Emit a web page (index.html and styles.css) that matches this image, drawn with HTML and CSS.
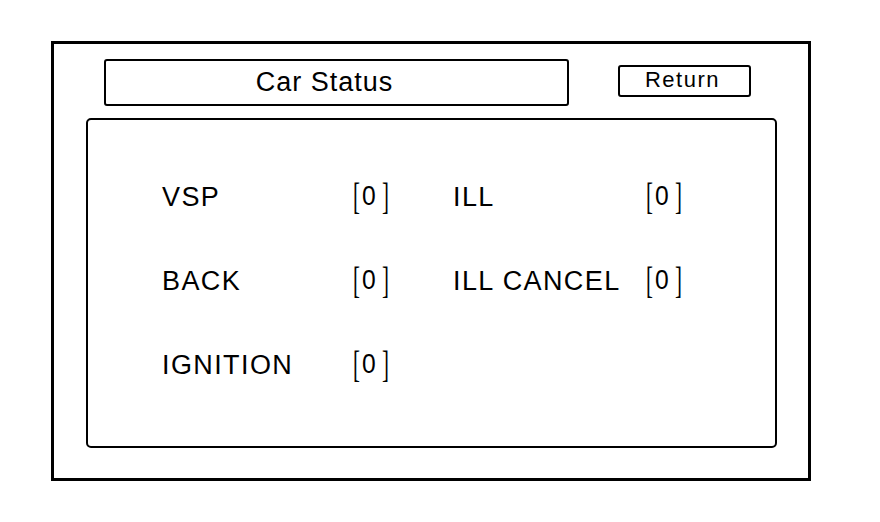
FILE: index.html
```html
<!DOCTYPE html>
<html>
<head>
<meta charset="utf-8">
<link rel="stylesheet" href="styles.css">
</head>
<body>
<div class="frame">
  <div class="header">
    <div class="title">Car Status</div>
    <button class="return">Return</button>
  </div>
  <div class="panel">
    <div class="grid">
      <div class="label">VSP</div>
      <div class="val"><span class="br">[</span><span class="num">0</span><span class="br">]</span></div>
      <div class="label">ILL</div>
      <div class="val"><span class="br">[</span><span class="num">0</span><span class="br">]</span></div>

      <div class="label">BACK</div>
      <div class="val"><span class="br">[</span><span class="num">0</span><span class="br">]</span></div>
      <div class="label">ILL CANCEL</div>
      <div class="val"><span class="br">[</span><span class="num">0</span><span class="br">]</span></div>

      <div class="label">IGNITION</div>
      <div class="val"><span class="br">[</span><span class="num">0</span><span class="br">]</span></div>
      <div class="label"></div>
      <div class="val"></div>
    </div>
  </div>
</div>
</body>
</html>
```
FILE: styles.css
```css
html, body {
  margin: 0;
  padding: 0;
  background: #fff;
}
body {
  font-family: "Liberation Sans", Arial, sans-serif;
  color: #000;
}
.frame {
  box-sizing: border-box;
  margin: 41px 0 0 51px;
  width: 760px;
  height: 440px;
  border: 3px solid #000;
  padding: 15px 0 0 32px;
}
.header {
  display: flex;
  align-items: flex-start;
  margin-left: 18px;
}
.title {
  box-sizing: border-box;
  width: 465px;
  height: 47px;
  border: 2px solid #000;
  border-radius: 3px;
  display: flex;
  align-items: center;
  justify-content: center;
  font-size: 27px;
  letter-spacing: 1px;
  padding: 0 24px 0 0;
}
.return {
  box-sizing: border-box;
  margin: 6px 0 0 49px;
  width: 133px;
  height: 32px;
  border: 2px solid #000;
  border-radius: 3px;
  background: #fff;
  font-family: "Liberation Sans", Arial, sans-serif;
  font-size: 22px;
  letter-spacing: 1.5px;
  color: #000;
  padding: 0 4px 3px 0;
}
.panel {
  box-sizing: border-box;
  margin-top: 12px;
  width: 691px;
  height: 330px;
  border: 2px solid #000;
  border-radius: 5px;
  padding: 34px 0 0 74px;
}
.grid {
  display: grid;
  grid-template-columns: 189px 102px 191px auto;
  grid-auto-rows: 84px;
  align-items: center;
}
.label {
  font-size: 27px;
  letter-spacing: 1.4px;
  padding-top: 2px;
}
.val {
  display: flex;
  align-items: center;
  height: 40px;
}
.br {
  display: inline-block;
  width: 9px;
  font-family: "Liberation Serif", "Times New Roman", serif;
  font-size: 38px;
  line-height: 40px;
  transform: scaleX(0.55);
  transform-origin: center;
  text-align: center;
}
.num {
  font-size: 28px;
  margin: 0 3px 0 1px;
  transform: scaleX(0.88);
  display: inline-block;
}
```
